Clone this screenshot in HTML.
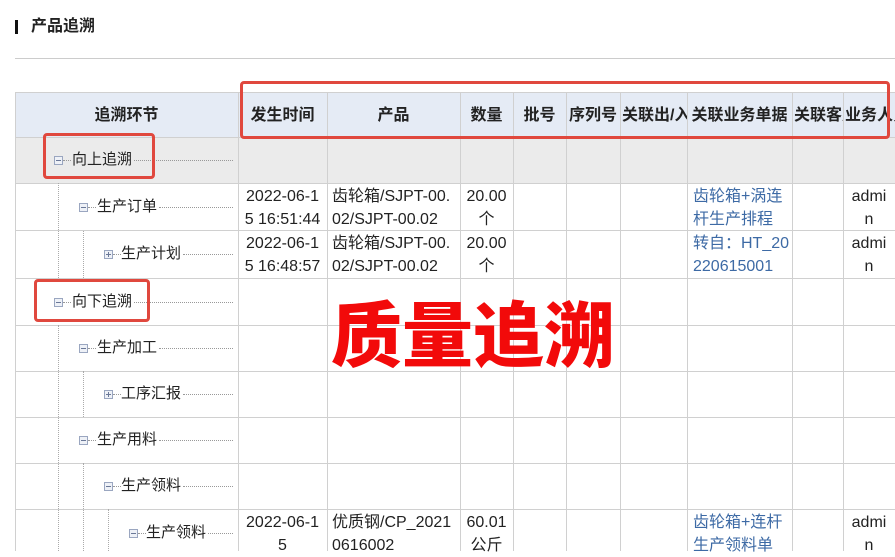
<!DOCTYPE html>
<html><head><meta charset="utf-8"><style>
*{margin:0;padding:0;box-sizing:border-box}
body{width:895px;height:551px;overflow:hidden;background:#fff;font-family:"Liberation Sans","Noto Sans CJK SC",sans-serif;color:#222;position:relative}
.a{position:absolute}
.hl{position:absolute;height:1px;background:#d0d0d0}
.vl{position:absolute;width:1px;background:#d0d0d0}
.th{position:absolute;top:93px;height:45px;line-height:45px;text-align:center;font-weight:bold;font-size:16px;white-space:nowrap;overflow:hidden}
.c{position:absolute;font-size:16px;line-height:23px;text-align:center;white-space:nowrap}
.lk{color:#3d6aa5;text-align:left}
.node{position:absolute;font-size:15px;line-height:20px;white-space:nowrap}
.ic{position:absolute;width:9px;height:9px;border:1px solid #9aa6c0;background:#eef1f7}
.ic:after{content:"";position:absolute;left:1px;top:3px;width:5px;height:1px;background:#6a7898}
.ic.p:before{content:"";position:absolute;left:3px;top:1px;width:1px;height:5px;background:#6a7898}
.dh{position:absolute;height:0;border-top:1px dotted #999}
.dv{position:absolute;width:0;border-left:1px dotted #aaa}
.box{position:absolute;border:3px solid #e0483e;border-radius:4px}
</style></head><body>
<div class="a" style="left:15px;top:20px;width:3px;height:14px;background:#111"></div>
<div class="a" style="left:31px;top:17px;font-size:16px;font-weight:bold;line-height:20px">产品追溯</div>
<div class="hl" style="left:15px;top:58px;width:880px;background:#ccc"></div>

<div class="a" style="left:15px;top:93px;width:880px;height:45px;background:#e5ebf5"></div>
<div class="a" style="left:15px;top:138px;width:880px;height:46px;background:#ebebeb"></div>

<div class="hl" style="left:15px;top:92px;width:880px"></div>
<div class="hl" style="left:15px;top:137px;width:880px"></div>
<div class="hl" style="left:15px;top:183px;width:880px"></div>
<div class="hl" style="left:15px;top:230px;width:880px"></div>
<div class="hl" style="left:15px;top:278px;width:880px"></div>
<div class="hl" style="left:15px;top:325px;width:880px"></div>
<div class="hl" style="left:15px;top:371px;width:880px"></div>
<div class="hl" style="left:15px;top:417px;width:880px"></div>
<div class="hl" style="left:15px;top:463px;width:880px"></div>
<div class="hl" style="left:15px;top:509px;width:880px"></div>
<div class="vl" style="left:15px;top:92px;height:459px"></div>
<div class="vl" style="left:238px;top:92px;height:459px"></div>
<div class="vl" style="left:327px;top:92px;height:459px"></div>
<div class="vl" style="left:460px;top:92px;height:459px"></div>
<div class="vl" style="left:513px;top:92px;height:459px"></div>
<div class="vl" style="left:566px;top:92px;height:459px"></div>
<div class="vl" style="left:620px;top:92px;height:459px"></div>
<div class="vl" style="left:687px;top:92px;height:459px"></div>
<div class="vl" style="left:792px;top:92px;height:459px"></div>
<div class="vl" style="left:843px;top:92px;height:459px"></div>

<div class="th" style="left:15px;width:223px">追溯环节</div>
<div class="th" style="left:238px;width:89px">发生时间</div>
<div class="th" style="left:327px;width:133px">产品</div>
<div class="th" style="left:460px;width:53px">数量</div>
<div class="th" style="left:513px;width:53px">批号</div>
<div class="th" style="left:566px;width:54px">序列号</div>
<div class="th" style="left:620px;width:67px;text-align:left;padding-left:2px">关联出/入</div>
<div class="th" style="left:687px;width:105px">关联业务单据</div>
<div class="th" style="left:792px;width:51px;text-align:left;padding-left:2px">关联客户</div>
<div class="th" style="left:843px;width:52px;text-align:left;padding-left:2px">业务人员</div>

<div class="dv" style="left:58px;top:183px;height:95px"></div>
<div class="dv" style="left:58px;top:325px;height:226px"></div>
<div class="dv" style="left:83px;top:231px;height:47px"></div>
<div class="dv" style="left:83px;top:371px;height:46px"></div>
<div class="dv" style="left:83px;top:463px;height:88px"></div>
<div class="dv" style="left:108px;top:509px;height:42px"></div>

<div class="ic" style="left:54px;top:156px"></div><div class="dh" style="left:63px;top:160px;width:8px"></div>
<div class="node" style="left:72px;top:150px">向上追溯</div><div class="dh" style="left:134px;top:160px;width:99px"></div>

<div class="ic" style="left:79px;top:203px"></div><div class="dh" style="left:88px;top:207px;width:8px"></div>
<div class="node" style="left:97px;top:197px">生产订单</div><div class="dh" style="left:159px;top:207px;width:74px"></div>

<div class="ic p" style="left:104px;top:250px"></div><div class="dh" style="left:113px;top:254px;width:8px"></div>
<div class="node" style="left:121px;top:244px">生产计划</div><div class="dh" style="left:183px;top:254px;width:50px"></div>

<div class="ic" style="left:54px;top:298px"></div><div class="dh" style="left:63px;top:302px;width:8px"></div>
<div class="node" style="left:72px;top:292px">向下追溯</div><div class="dh" style="left:134px;top:302px;width:99px"></div>

<div class="ic" style="left:79px;top:344px"></div><div class="dh" style="left:88px;top:348px;width:8px"></div>
<div class="node" style="left:97px;top:338px">生产加工</div><div class="dh" style="left:159px;top:348px;width:74px"></div>

<div class="ic p" style="left:104px;top:390px"></div><div class="dh" style="left:113px;top:394px;width:8px"></div>
<div class="node" style="left:121px;top:384px">工序汇报</div><div class="dh" style="left:183px;top:394px;width:50px"></div>

<div class="ic" style="left:79px;top:436px"></div><div class="dh" style="left:88px;top:440px;width:8px"></div>
<div class="node" style="left:97px;top:430px">生产用料</div><div class="dh" style="left:159px;top:440px;width:74px"></div>

<div class="ic" style="left:104px;top:482px"></div><div class="dh" style="left:113px;top:486px;width:8px"></div>
<div class="node" style="left:121px;top:476px">生产领料</div><div class="dh" style="left:183px;top:486px;width:50px"></div>

<div class="ic" style="left:129px;top:529px"></div><div class="dh" style="left:138px;top:533px;width:8px"></div>
<div class="node" style="left:146px;top:523px">生产领料</div><div class="dh" style="left:208px;top:533px;width:25px"></div>

<div class="c" style="left:238px;width:89px;top:185px">2022-06-1<br>5 16:51:44</div>
<div class="c" style="left:327px;width:133px;top:185px;text-align:left;padding-left:5px">齿轮箱/SJPT-00.<br>02/SJPT-00.02</div>
<div class="c" style="left:460px;width:53px;top:185px">20.00<br>个</div>
<div class="c lk" style="left:693px;top:185px">齿轮箱+涡连<br>杆生产排程</div>
<div class="c" style="left:843px;width:52px;top:185px">admi<br>n</div>

<div class="c" style="left:238px;width:89px;top:232px">2022-06-1<br>5 16:48:57</div>
<div class="c" style="left:327px;width:133px;top:232px;text-align:left;padding-left:5px">齿轮箱/SJPT-00.<br>02/SJPT-00.02</div>
<div class="c" style="left:460px;width:53px;top:232px">20.00<br>个</div>
<div class="c lk" style="left:693px;top:232px">转自：HT_20<br>220615001</div>
<div class="c" style="left:843px;width:52px;top:232px">admi<br>n</div>

<div class="c" style="left:238px;width:89px;top:511px">2022-06-1<br>5</div>
<div class="c" style="left:327px;width:133px;top:511px;text-align:left;padding-left:5px">优质钢/CP_2021<br>0616002</div>
<div class="c" style="left:460px;width:53px;top:511px">60.01<br>公斤</div>
<div class="c lk" style="left:693px;top:511px">齿轮箱+连杆<br>生产领料单</div>
<div class="c" style="left:843px;width:52px;top:511px">admi<br>n</div>

<div class="a" style="left:331px;top:296px;font-size:71px;line-height:84px;font-weight:900;color:#f20a0a;white-space:nowrap">质量追溯</div>
<div class="box" style="left:240px;top:81px;width:650px;height:58px"></div>
<div class="box" style="left:43px;top:133px;width:112px;height:46px"></div>
<div class="box" style="left:34px;top:279px;width:116px;height:43px"></div>
</body></html>
